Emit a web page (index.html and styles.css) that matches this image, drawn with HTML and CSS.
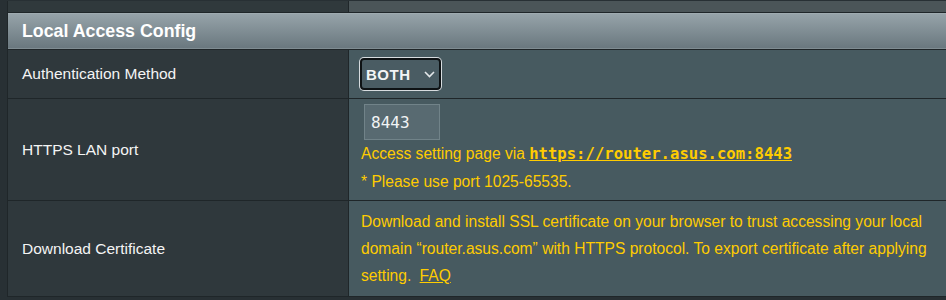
FILE: index.html
```html
<!DOCTYPE html>
<html lang="en">
<head>
  <meta charset="UTF-8" />
  <title>Local Access Config</title>
  <link rel="stylesheet" href="styles.css">
</head>
<body>
  <div class="config">
    <div class="prev-th"></div>
    <div class="prev-td"></div>

    <div class="title">Local Access Config</div>

    <div class="label row-auth">Authentication Method</div>
    <div class="value row-auth value-center">
      <span class="select-wrap">
        <select class="input-option">
          <option>BOTH</option>
        </select>
        <svg class="chevron" width="11" height="7" viewBox="0 0 11 7">
          <path d="M1 1 L5.5 5.5 L10 1" fill="none" stroke="#e4e8ea" stroke-width="1.6"/>
        </svg>
      </span>
    </div>

    <div class="label row-port">HTTPS LAN port</div>
    <div class="value row-port port-cell">
      <input type="text" class="input-port" value="8443">
      <div class="hint">Access setting page via <a href="#" class="hint-link">https://router.asus.com:8443</a></div>
      <div class="hint">* Please use port 1025-65535.</div>
    </div>

    <div class="label row-cert">Download Certificate</div>
    <div class="value row-cert cert-cell">
      <div class="hint">Download and install SSL certificate on your browser to trust accessing your local domain “router.asus.com” with HTTPS protocol. To export certificate after applying setting. <a href="#" class="faq-link">FAQ</a></div>
    </div>
  </div>
</body>
</html>
```

FILE: styles.css
```css
* {
  box-sizing: border-box;
}

body {
  margin: 0;
  padding: 0 0 0 7px;
  background: #283034;
  font-family: "Liberation Sans", Arial, sans-serif;
  overflow: hidden;
  height: 300px;
}

.config {
  display: grid;
  grid-template-columns: 340px 600px;
  grid-template-rows: 11px 36px 48px 101px 95px;
  gap: 1px;
  width: 943px;
  background: #1f2629;
  border: 1px solid #1f2629;
  border-top: 0;
  margin-top: 1px;
}

.prev-th {
  background: #30393c;
}

.prev-td {
  background: #4b5558;
}

.title {
  grid-column: 1 / 3;
  background: linear-gradient(to bottom, #96a3a9, #6a787f);
  color: #fff;
  font-weight: bold;
  font-size: 17.8px;
  padding-left: 14px;
  display: flex;
  align-items: center;
  border-top: 1px solid #9fabb0;
  border-bottom: 1px solid #7f8c92;
}

.label {
  background: #2f383c;
  color: #f4f4f4;
  font-size: 15.5px;
  padding-left: 14px;
  display: flex;
  align-items: center;
}

.value {
  background: #475a60;
  padding-left: 12px;
  padding-right: 5px;
}

.value-center {
  display: flex;
  align-items: center;
}

.select-wrap {
  position: relative;
  display: inline-block;
  margin-left: -1px;
}

.input-option {
  appearance: none;
  -webkit-appearance: none;
  width: 81px;
  height: 32px;
  margin: 0;
  padding: 0 0 0 4px;
  background: #4a5c63;
  color: #f2f4f5;
  border: 2px solid #0e1214;
  border-radius: 4px;
  box-shadow: 0 0 0 1px #d7dcdf;
  font-family: "Liberation Sans", Arial, sans-serif;
  font-weight: bold;
  font-size: 15px;
  letter-spacing: 0.5px;
  outline: none;
}

.chevron {
  position: absolute;
  right: 6px;
  top: 13px;
  pointer-events: none;
}

.port-cell {
  padding-top: 5px;
}

.input-port {
  display: block;
  width: 76px;
  height: 36px;
  margin: 0 0 0 3px;
  padding: 0 0 0 6px;
  background: #586a71;
  border: 1px solid #718389;
  color: #f2f4f5;
  font-family: "DejaVu Sans Mono", "Liberation Mono", monospace;
  font-size: 16px;
  outline: none;
}

.hint {
  color: #ffcc00;
  font-size: 15.6px;
  line-height: 28px;
}

.hint-link {
  color: #ffcc00;
  font-family: "DejaVu Sans Mono", "Liberation Mono", monospace;
  font-weight: bold;
  font-size: 15.6px;
  text-decoration: underline;
}

.cert-cell {
  padding-top: 7px;
}

.cert-cell .hint {
  line-height: 27px;
}

.faq-link {
  color: #ffcc00;
  margin-left: 4px;
  text-decoration: underline;
}
```
